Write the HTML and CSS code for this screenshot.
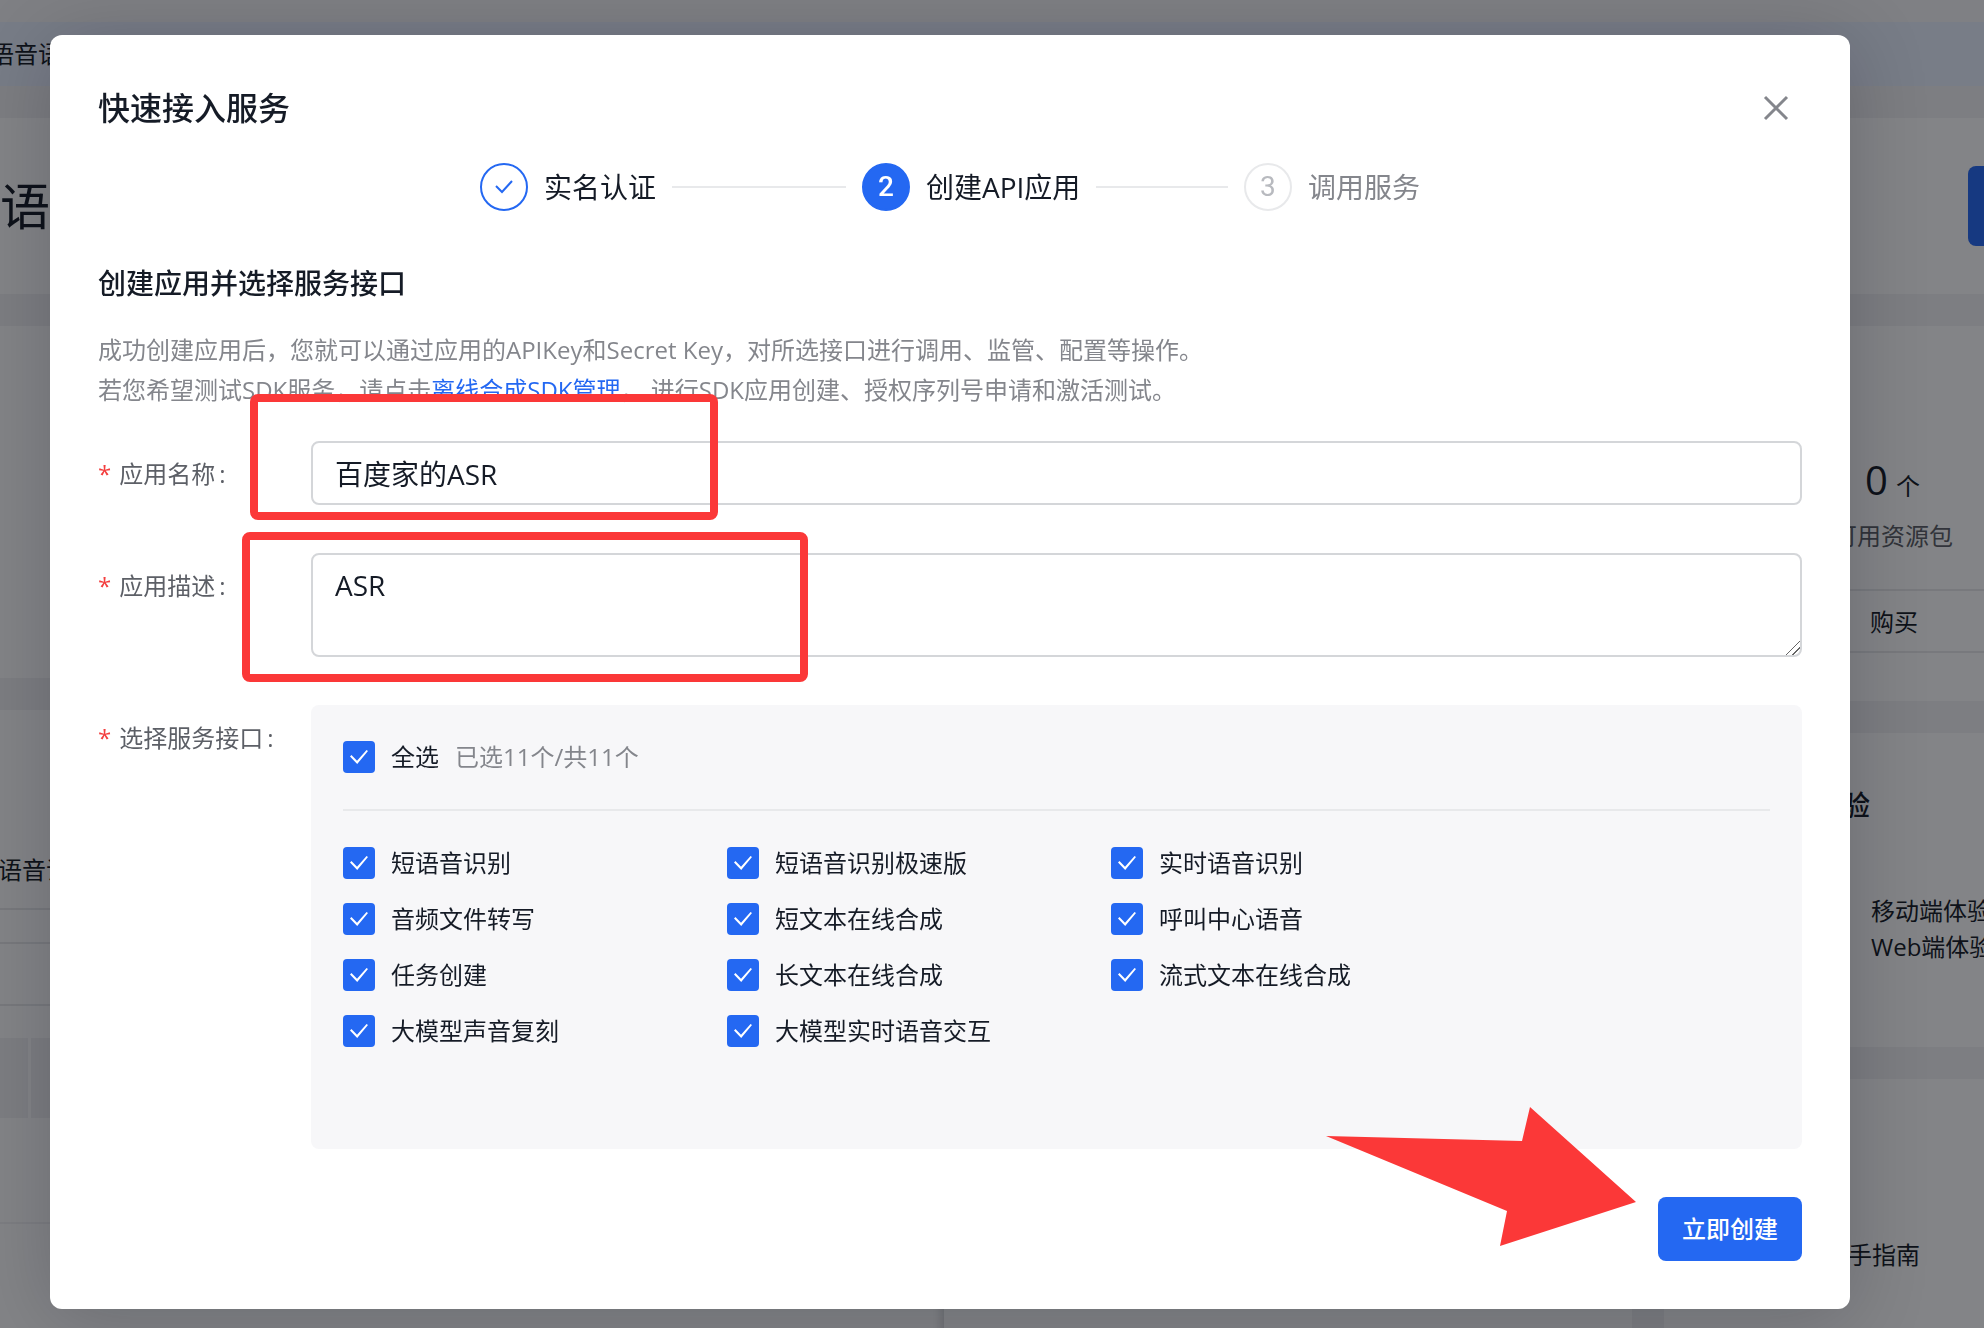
FILE: index.html
```html
<!DOCTYPE html>
<html lang="zh">
<head>
    <meta charset="UTF-8">
    <meta name="viewport" content="width=device-width, initial-scale=1.0">
    <title>快速接入服务</title>
    <link rel="stylesheet" href="styles.css">
</head>
<body>
<div class="page">
    <div class="topbar"></div>
    <div class="banner">语音语</div>
    <div class="page-head">
        <h1 class="page-title">语</h1>
        <button class="page-btn" type="button" aria-label="立即使用"></button>
    </div>
    <div class="columns">
        <div class="col-main">
            <div class="card card-overview"></div>
            <div class="card card-list">
                <p class="list-title">语音识</p>
                <div class="list-tabs"></div>
                <div class="list-filter"></div>
                <div class="list-head"><span></span><span></span></div>
                <div class="list-row"></div>
                <div class="list-fixed"></div>
            </div>
        </div>
        <div class="col-side">
            <div class="card card-quota">
                <div class="quota">
                    <p class="quota-num">0<small>个</small></p>
                    <p class="quota-label">可用资源包</p>
                </div>
                <div class="quota-buy">购买</div>
            </div>
            <div class="card card-demo">
                <h2>体验</h2>
                <p>移动端体验<br>Web端体验</p>
            </div>
            <div class="card card-guide">新手指南</div>
        </div>
    </div>
</div>

<div class="mask">
    <div class="dialog" role="dialog" aria-labelledby="dialogTitle">
        <div class="dialog-head">
            <h2 class="dialog-title" id="dialogTitle">快速接入服务</h2>
            <button class="close" type="button" aria-label="关闭">
                <svg width="28" height="28" viewBox="0 0 28 28"><path d="M3 3L25 25M25 3L3 25"/></svg>
            </button>
        </div>
        <ol class="steps">
            <li class="step done">
                <span class="step-icon"><svg width="20" height="16" viewBox="0 0 20 16"><path d="M2 7L8 13L18 2"/></svg></span>
                <span class="step-text">实名认证</span>
            </li>
            <li class="step active">
                <span class="step-icon">2</span>
                <span class="step-text">创建API应用</span>
            </li>
            <li class="step">
                <span class="step-icon">3</span>
                <span class="step-text">调用服务</span>
            </li>
        </ol>
        <h3 class="section-title">创建应用并选择服务接口</h3>
        <p class="desc">成功创建应用后，您就可以通过应用的APIKey和Secret Key，对所选接口进行调用、监管、配置等操作。<br>若您希望测试SDK服务，请点击<a href="#">离线合成SDK管理</a>， 进行SDK应用创建、授权序列号申请和激活测试。</p>
        <form class="form">
            <div class="field">
                <label class="field-label" for="appName">应用名称</label>
                <input class="control" id="appName" type="text" value="百度家的ASR">
                <div class="mark mark-name"></div>
            </div>
            <div class="field">
                <label class="field-label" for="appDesc">应用描述</label>
                <textarea class="control" id="appDesc">ASR</textarea>
                <div class="mark mark-desc"></div>
            </div>
            <div class="field">
                <span class="field-label" id="apiLabel">选择服务接口</span>
                <div class="panel" role="group" aria-labelledby="apiLabel">
                    <div class="check-all">
                        <label class="check"><input type="checkbox" checked>全选</label>
                        <span class="count">已选11个/共11个</span>
                    </div>
                    <div class="check-list">
                        <label class="check"><input type="checkbox" checked>短语音识别</label>
                        <label class="check"><input type="checkbox" checked>短语音识别极速版</label>
                        <label class="check"><input type="checkbox" checked>实时语音识别</label>
                        <label class="check"><input type="checkbox" checked>音频文件转写</label>
                        <label class="check"><input type="checkbox" checked>短文本在线合成</label>
                        <label class="check"><input type="checkbox" checked>呼叫中心语音</label>
                        <label class="check"><input type="checkbox" checked>任务创建</label>
                        <label class="check"><input type="checkbox" checked>长文本在线合成</label>
                        <label class="check"><input type="checkbox" checked>流式文本在线合成</label>
                        <label class="check"><input type="checkbox" checked>大模型声音复刻</label>
                        <label class="check"><input type="checkbox" checked>大模型实时语音交互</label>
                    </div>
                </div>
            </div>
            <div class="form-foot">
                <button class="submit" type="button">立即创建</button>
                <svg class="arrow" width="310" height="140" viewBox="0 0 310 140"><path d="M0 29L196 34L204 0L310 95L174 139L181 104Z"/></svg>
            </div>
        </form>
    </div>
</div>
</body>
</html>
```
FILE: styles.css
```css
* {
    box-sizing: border-box;
}
body {
    margin: 0;
    height: 100vh;
    overflow: hidden;
    font-family: "Open Sans", "Noto Sans CJK SC", sans-serif;
    font-size: 24px;
    line-height: 32px;
    color: #151b26;
}
h1, h2, h3, p, ol {
    margin: 0;
    padding: 0;
}
h1, h2, h3 {
    font-weight: 500;
}
button, input, textarea {
    font: inherit;
    color: inherit;
}

/* page under the mask */
.page {
    height: 100vh;
    overflow: hidden;
    background: #f2f2f4;
}
.topbar {
    height: 22px;
    background: #f7f7f9;
}
.banner {
    height: 64px;
    line-height: 64px;
    text-indent: -10px;
    background: #e9f0ff;
}
.page-head {
    display: flex;
    justify-content: space-between;
    align-items: center;
    height: 176px;
    margin-top: 32px;
    background: #fff;
}
.page-title {
    font-size: 50px;
    font-weight: 400;
    line-height: 64px;
}
.page-btn {
    width: 16px;
    height: 80px;
    border: 0;
    border-radius: 8px 0 0 8px;
    background: #2468f2;
}
.columns {
    display: flex;
    gap: 32px;
    margin-top: 32px;
}
.col-main {
    flex: 1;
}
.col-side {
    width: 320px;
}
.card {
    background: #fff;
}
.card + .card {
    margin-top: 32px;
}
.card-overview {
    height: 352px;
}
.card-list {
    height: 640px;
    padding-top: 144px;
}
.list-title {
    height: 54px;
    text-indent: -2px;
}
.list-tabs {
    height: 36px;
    border: solid #e8e9eb;
    border-width: 2px 0;
}
.list-filter {
    height: 62px;
    border-bottom: 2px solid #e8e9eb;
}
.list-head {
    display: flex;
    gap: 3px;
    height: 80px;
    margin-top: 32px;
}
.list-head span {
    flex: 1;
    background: #f2f2f4;
}
.list-head span:first-child {
    flex: 0 0 28px;
}
.list-row {
    height: 106px;
    border-bottom: 2px solid #f2f2f4;
}
.list-fixed {
    height: 126px;
    margin-left: 944px;
    box-shadow: -6px 0 10px -4px rgba(7, 12, 20, 0.2);
}
.card-quota {
    height: 375px;
    padding-top: 130px;
}
.quota {
    height: 133px;
    padding-left: 169px;
}
.quota-num {
    padding-left: 32px;
    font-size: 40px;
    font-weight: 500;
    line-height: 48px;
}
.quota-num small {
    margin-left: 8px;
    font-size: 24px;
    font-weight: 400;
}
.quota-label {
    margin-top: 10px;
    color: #5c5f66;
}
.quota-buy {
    padding-left: 206px;
    line-height: 62px;
    height: 64px;
    border: solid #e8e9eb;
    border-width: 2px 0;
}
.card-demo {
    height: 314px;
    padding: 56px 0 0 150px;
}
.card-demo h2 {
    font-size: 28px;
    line-height: 32px;
}
.card-demo p {
    margin-top: 72px;
    padding-left: 57px;
    line-height: 36px;
    white-space: nowrap;
}
.card-guide {
    height: 300px;
    padding: 160px 0 0 160px;
}

/* dialog */
.mask {
    position: fixed;
    inset: 0;
    padding: 35px 134px 0 50px;
    background: rgba(8, 9, 16, 0.5);
}
.dialog {
    padding: 48px;
    border-radius: 12px;
    background: #fff;
    box-shadow: 0 8px 80px rgba(7, 12, 20, 0.2);
}
.dialog-head {
    display: flex;
    justify-content: space-between;
    align-items: center;
    height: 50px;
}
.dialog-title {
    font-size: 32px;
    line-height: 48px;
}
.close {
    display: flex;
    width: 52px;
    height: 48px;
    padding: 0;
    border: 0;
    background: none;
    align-items: center;
    justify-content: center;
}
.close svg {
    fill: none;
    stroke: #84868c;
    stroke-width: 3;
}
.steps {
    display: flex;
    justify-content: center;
    gap: 16px;
    margin-top: 30px;
    list-style: none;
    font-size: 28px;
}
.step {
    display: flex;
    align-items: center;
    gap: 16px;
    color: #84868c;
}
.step:not(:last-child) {
    width: 366px;
}
.step:not(:last-child)::after {
    content: "";
    flex: 1;
    height: 2px;
    background: #e8e9eb;
}
.step-icon {
    display: flex;
    align-items: center;
    justify-content: center;
    width: 48px;
    height: 48px;
    border: 2px solid #e8e9eb;
    border-radius: 50%;
    font-family: Roboto, sans-serif;
    color: #b8babf;
}
.done, .active {
    color: #151b26;
}
.done .step-icon {
    border-color: #2468f2;
}
.done svg {
    fill: none;
    stroke: #2468f2;
    stroke-width: 2;
}
.active .step-icon {
    border-color: #2468f2;
    background: #2468f2;
    color: #fff;
    font-weight: 500;
}
.section-title {
    margin-top: 52px;
    font-size: 28px;
    line-height: 40px;
}
.desc {
    margin-top: 27px;
    line-height: 40px;
    color: #84868c;
}
.desc a {
    color: #2468f2;
    text-decoration: none;
}
.form {
    display: flex;
    flex-direction: column;
    gap: 48px;
    margin-top: 31px;
}
.field {
    display: flex;
    position: relative;
}
.field-label {
    width: 213px;
    line-height: 66px;
    color: #5c5f66;
}
.field-label::before {
    content: "*";
    margin-right: 8px;
    color: #f33e3e;
}
.field-label::after {
    content: ":";
    margin-left: 4px;
}
.control {
    flex: 1;
    height: 64px;
    padding: 0 22px;
    border: 2px solid #d4d6d9;
    border-radius: 8px;
    background: #fff;
    font-size: 28px;
}
.field-label[for="appName"] {
    height: 64px;
}
textarea.control {
    height: 104px;
    padding: 10px 22px;
    line-height: 40px;
}
textarea::-webkit-scrollbar {
    width: 18px;
    height: 18px;
}
textarea::-webkit-resizer {
    background: linear-gradient(135deg, transparent 51%, #666 51% 56%, transparent 56% 73%, #666 73% 78%, transparent 78%);
}
.panel {
    flex: 1;
    min-height: 444px;
    padding: 36px 32px;
    border-radius: 8px;
    background: #f7f7f9;
}
.check-all {
    display: flex;
    gap: 16px;
    padding-bottom: 36px;
    border-bottom: 2px solid #e8e9eb;
}
.count {
    color: #84868c;
}
.check-list {
    display: grid;
    grid-template-columns: repeat(auto-fill, 384px);
    row-gap: 24px;
    margin-top: 36px;
}
.check {
    display: flex;
    align-items: center;
    gap: 16px;
}
.check input {
    appearance: none;
    display: flex;
    align-items: center;
    justify-content: center;
    width: 32px;
    height: 32px;
    margin: 0;
    border-radius: 4px;
    background: #2468f2;
}
/* tick */
.check input::before {
    content: "";
    width: 18px;
    height: 14px;
    background: #fff;
    clip-path: polygon(0 46%, 8% 36%, 39% 77%, 92% 0, 100% 8%, 40% 100%);
}
.form-foot {
    display: flex;
    position: relative;
    justify-content: flex-end;
}
.submit {
    height: 64px;
    padding: 0 24px;
    border: 0;
    border-radius: 8px;
    background: #2468f2;
    color: #fff;
    font-weight: 500;
}

/* red annotations */
.mark {
    position: absolute;
    border: 8px solid #fb3838;
    border-radius: 8px;
}
.mark-name {
    left: 152px;
    top: -47px;
    width: 468px;
    height: 126px;
}
.mark-desc {
    left: 144px;
    top: -21px;
    width: 566px;
    height: 150px;
}
.arrow {
    position: absolute;
    right: 166px;
    top: -90px;
    fill: #fb3838;
}
```
